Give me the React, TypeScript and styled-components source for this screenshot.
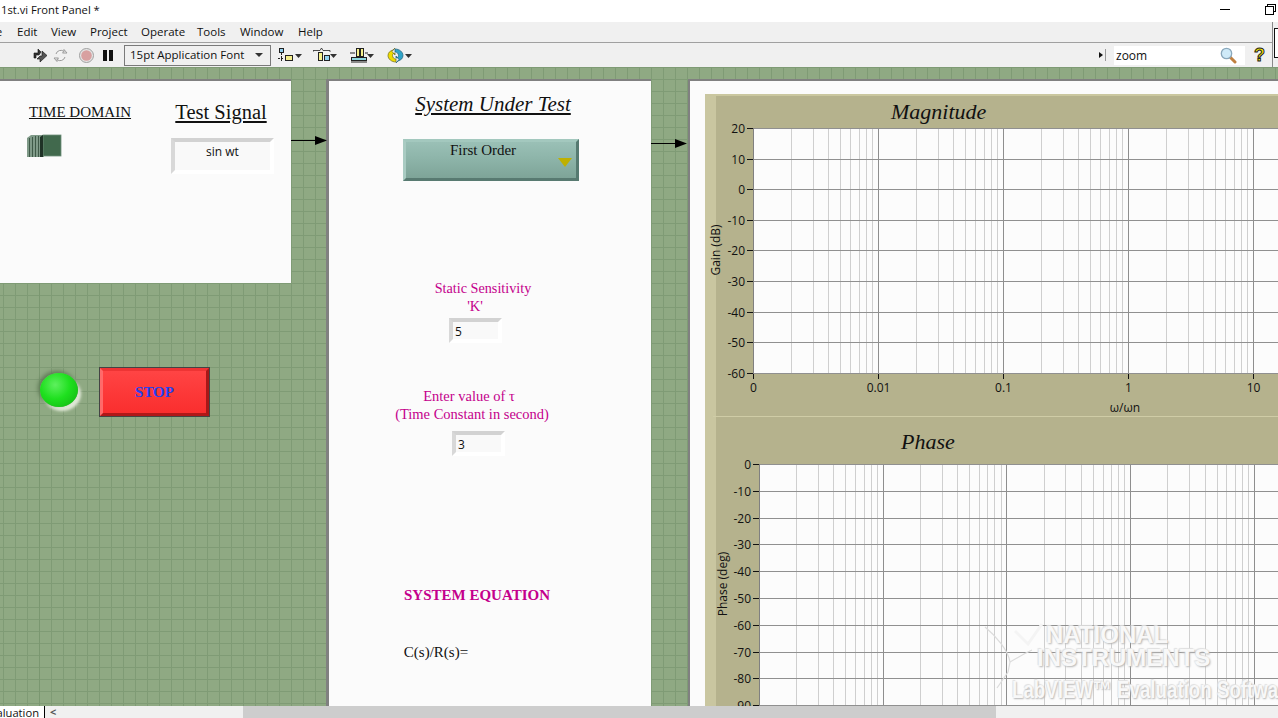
import styled, {createGlobalStyle} from 'styled-components';

const SANS = `"Open Sans", "Noto Sans", sans-serif`;
const SERIF = `"Liberation Serif", serif`;
const MAGENTA = '#c4008c';

const GlobalStyle = createGlobalStyle`
  html, body { margin: 0; padding: 0; background: #fff; overflow: hidden; }
  #root { width: 1278px; height: 718px; }
`;

const Window = styled.div`
  position: relative;
  width: 1278px;
  height: 718px;
  display: flex;
  flex-direction: column;
  overflow: hidden;
  font-family: ${SANS};
  color: #111;
`;

const TitleBar = styled.div`
  height: 22px;
  flex: none;
  display: flex;
  align-items: center;
  justify-content: space-between;
  padding: 0 2px 4px 1px;
  box-sizing: border-box;
  background: #fff;
  font-size: 11.2px;
`;

const WindowButtons = styled.div`
  display: flex;
  align-items: center;
  gap: 34px;
`;

const MenuBar = styled.div`
  height: 21px;
  flex: none;
  box-sizing: border-box;
  display: flex;
  align-items: center;
  background: #f0f0f0;
  border-bottom: 1px solid #a0a0a0;
  font-size: 11.5px;
  margin-left: -16px;
  padding-bottom: 2px;
`;

const MenuItem = styled.span<{ $w: number }>`
  width: ${({ $w }) => $w}px;
  flex: none;
`;

const ToolBar = styled.div`
  height: 24px;
  flex: none;
  display: flex;
  align-items: center;
  background: #f0f0f0;
  padding-left: 33px;
  box-sizing: border-box;
`;

const ToolIcon = styled.svg<{ $gap?: number }>`
  flex: none;
  display: block;
  margin-right: ${({ $gap }) => $gap ?? 0}px;
`;

const FontSelect = styled.div`
  width: 147px;
  height: 21px;
  flex: none;
  box-sizing: border-box;
  border: 1px solid #7a7a7a;
  margin-right: 7px;
  padding: 0 7px 1px 5px;
  display: flex;
  align-items: center;
  justify-content: space-between;
  font-size: 11.5px;
`;

const DownCaret = styled.span`
  width: 0;
  height: 0;
  border-left: 4px solid transparent;
  border-right: 4px solid transparent;
  border-top: 4px solid #333;
`;

const SearchGroup = styled.div`
  margin-left: auto;
  display: flex;
  align-items: center;
  height: 100%;
`;

const SearchBox = styled.div`
  width: 131px;
  height: 19px;
  margin: 0 9px 0 5px;
  padding: 0 8px 0 2px;
  box-sizing: border-box;
  background: #fff;
  display: flex;
  align-items: center;
  justify-content: space-between;
  font-size: 12px;
`;

const HelpMark = styled.span`
  width: 24px;
  text-align: left;
  font-family: "Liberation Sans", sans-serif;
  font-weight: 700;
  font-size: 18px;
  line-height: 1;
  color: #f6e800;
  -webkit-text-stroke: 1px #222;
`;

/* edge of the next pane peeking out past the toolbars */
const ToolEdge = styled.div`
  position: absolute;
  left: 1272px;
  top: 22px;
  width: 6px;
  height: 45px;
  box-sizing: border-box;
  border-left: 1px solid #8a8a8a;
  background: #f0f0f0;
  &::after {
    content: '';
    position: absolute;
    left: 1px;
    top: 6px;
    width: 6px;
    height: 30px;
    box-sizing: border-box;
    border: 1px solid #111;
    background: #fff;
  }
`;

const Canvas = styled.div`
  position: relative;
  flex: none;
  height: 639px;
  overflow: hidden;
  background-color: #8fa983;
  background-image:
    linear-gradient(#7a9770, #7a9770),
    linear-gradient(to right, #7f9b75 1px, transparent 1px),
    linear-gradient(to bottom, #7f9b75 1px, transparent 1px);
  background-size: 1px 100%, 12px 12px, 12px 12px;
  background-position: 39px 0, 3px 0, 0 0;
  background-repeat: no-repeat, repeat, repeat;
`;

/* free canvas: the front panel's decorations sit where the user dropped them */
const Decoration = styled.div<{ $x: number; $y: number; $w: number; $h: number; $edge?: number }>`
  position: absolute;
  left: ${({ $x }) => $x}px;
  top: ${({ $y }) => $y}px;
  width: ${({ $w }) => $w}px;
  height: ${({ $h }) => $h}px;
  box-sizing: border-box;
  background: #fbfbfb;
  border-top: 2px solid #808080;
  border-left: ${({ $edge }) => $edge ?? 0}px solid #808080;
`;

const Label = styled.div<{ $x: number; $y: number; $size?: number; $color?: string; $bold?: boolean; $italic?: boolean; $under?: boolean }>`
  position: absolute;
  left: ${({ $x }) => $x}px;
  top: ${({ $y }) => $y}px;
  font-family: ${SERIF};
  font-size: ${({ $size }) => $size ?? 15}px;
  line-height: 1.15;
  white-space: nowrap;
  transform: translateX(-50%);
  color: ${({ $color }) => $color ?? '#111'};
  font-weight: ${({ $bold }) => ($bold ? 700 : 400)};
  font-style: ${({ $italic }) => ($italic ? 'italic' : 'normal')};
  text-decoration: ${({ $under }) => ($under ? 'underline' : 'none')};
`;

const Control = styled.div<{ $x: number; $y: number; $w: number; $h: number; $center?: boolean }>`
  position: absolute;
  left: ${({ $x }) => $x}px;
  top: ${({ $y }) => $y}px;
  width: ${({ $w }) => $w}px;
  height: ${({ $h }) => $h}px;
  box-sizing: border-box;
  border-style: solid;
  border-width: 4px;
  border-color: #d2d2d2 #fff #fff #d8d8d8;
  background: #f9f9f9;
  font-size: 12px;
  padding: 1px 0 0 ${({ $center }) => ($center ? 0 : 2)}px;
  text-align: ${({ $center }) => ($center ? 'center' : 'left')};
`;

const RingButton = styled.div`
  position: absolute;
  left: 403px;
  top: 72px;
  width: 176px;
  height: 42px;
  box-sizing: border-box;
  border: 3px solid;
  border-color: #a3c8be #567a71 #587a71 #a9cbc2;
  background: linear-gradient(#9ac0b6 0%, #8fb6ab 40%, #7ea498 100%);
  font-family: ${SERIF};
  font-size: 15px;
  padding: 0 16px 0 0;
  text-align: center;
  line-height: 17px;
`;

const RingArrow = styled.span`
  position: absolute;
  right: 4px;
  top: 16px;
  width: 0;
  height: 0;
  border-left: 7px solid transparent;
  border-right: 7px solid transparent;
  border-top: 9px solid #bfb000;
`;

const Led = styled.div`
  position: absolute;
  left: 40px;
  top: 306px;
  width: 38px;
  height: 34px;
  border-radius: 50%;
  background: radial-gradient(ellipse at 40% 35%, #5ef05e 0%, #1fe01f 45%, #10b010 100%);
  box-shadow: -2px -2px 4px #5f7a56, 3px 4px 3px #e2ead9;
`;

const StopButton = styled.div`
  position: absolute;
  left: 99px;
  top: 300px;
  width: 111px;
  height: 50px;
  box-sizing: border-box;
  border: 4px solid;
  border-color: #ee3434 #a81818 #b01818 #ff6a6a;
  outline: 1px solid #444;
  outline-offset: -1px;
  background: linear-gradient(#ff4444, #fa2e2e);
  padding-top: 1px;
  display: flex;
  align-items: center;
  justify-content: center;
  font-family: ${SERIF};
  font-weight: 700;
  font-size: 15px;
  color: #2440f0;
`;

const WireSvg = styled.svg<{ $x: number; $y: number }>`
  position: absolute;
  left: ${({ $x }) => $x}px;
  top: ${({ $y }) => $y}px;
`;

const ToggleSvg = styled.svg`
  position: absolute;
  left: 26px;
  top: 53px;
`;

const GraphPanel = styled.div`
  position: absolute;
  left: 705px;
  top: 27px;
  width: 573px;
  height: 612px;
  box-sizing: border-box;
  background: #b5b28d;
  border-top: 2px solid #cac79f;
  border-left: 11px solid #c9c6a0;
  display: flex;
  flex-direction: column;
`;

const GraphTitle = styled.div<{ $pad: number; $h: number; $top: number }>`
  height: ${({ $h }) => $h}px;
  flex: none;
  box-sizing: border-box;
  padding: ${({ $top }) => $top}px 0 0 ${({ $pad }) => $pad}px;
  font-family: ${SERIF};
  font-style: italic;
  font-size: 22px;
  line-height: 24px;
  color: #111;
`;

const PlotSvg = styled.svg`
  display: block;
  flex: none;
  margin-left: -11px;
  font-family: ${SANS};
  font-size: 12px;
`;

const Watermark = styled.div`
  position: absolute;
  left: 984px;
  top: 555px;
  width: 294px;
  height: 84px;
  overflow: hidden;
  pointer-events: none;
`;

const WatermarkLogo = styled.svg`
  position: absolute;
  left: 0;
  top: 0;
`;

const WatermarkText = styled.div<{ $x: number; $y: number; $stretch?: number }>`
  position: absolute;
  left: ${({ $x }) => $x}px;
  top: ${({ $y }) => $y}px;
  font-family: "Liberation Sans", sans-serif;
  font-weight: 700;
  font-size: 24px;
  line-height: 22px;
  white-space: nowrap;
  color: #f8f8f8;
  transform-origin: left top;
  transform: scaleX(${({ $stretch }) => $stretch ?? 1});
  text-shadow: 1px 1px 2px #b4b4b4, -1px -1px 1px #e2e2e2;
`;

const BottomBar = styled.div`
  height: 12px;
  flex: none;
  display: flex;
  align-items: stretch;
  background: #f0f0f0;
  font-size: 11.2px;
`;

const Tab = styled.div`
  width: 45px;
  box-sizing: border-box;
  border: 1px solid #000;
  border-width: 1px 1px 0 0;
  background: #fff;
  margin-top: -1px;
  overflow: hidden;
  direction: rtl;
  line-height: 14px;
  padding-right: 5px;
  white-space: nowrap;
`;

const TabArrow = styled.span`
  width: 198px;
  flex: none;
  padding-left: 5px;
  box-sizing: border-box;
  font-size: 11px;
  line-height: 12px;
  font-weight: 700;
  color: #555;
`;

const Thumb = styled.div`
  width: 753px;
  background: #cdcdcd;
`;

const decadeLines = (start: number, decade: number, count: number) => {
  const lines: number[] = [];
  for (let d = 0; d < count; d++) {
    for (let m = 2; m < 10; m++) {
      const x = Math.round(start + decade * (d + Math.log10(m))) + 0.5;
      if (x < 1278) lines.push(x);
    }
  }
  return lines;
};

type PlotProps = {
  x0: number;
  top: number;
  bottom: number;
  decade: number;
  height: number;
  yTicks: { v: string; y: number }[];
  xLabels?: string[];
  yTitle: string;
  yTitleX: number;
  yTitleY: number;
};

// svg starts a little above the plot so the top tick label isn't clipped
const HEADROOM = 8;

const Plot = ({x0, top, bottom, decade, height, yTicks, xLabels, yTitle, yTitleX, yTitleY}: PlotProps) => {
  const majors = [1, 2, 3, 4].map((i) => Math.round(x0 + decade * i) + 0.5);
  return (
    <PlotSvg width={573} height={height + HEADROOM} viewBox={`705 ${top - HEADROOM} 573 ${height + HEADROOM}`}>
      <rect x={x0} y={top} width={1278 - x0} height={bottom - top} fill="#fcfcfc" />
      {decadeLines(x0, decade, 5).map((x) => (
        <line key={x} x1={x} x2={x} y1={top} y2={bottom} stroke="#cfcfcf" />
      ))}
      {majors.map((x) => (
        <line key={x} x1={x} x2={x} y1={top} y2={bottom} stroke="#8e8e8e" />
      ))}
      {yTicks.map((t) => (
        <g key={t.v}>
          <line x1={x0} x2={1278} y1={t.y + 0.5} y2={t.y + 0.5} stroke="#909090" />
          <line x1={x0 - 6} x2={x0} y1={t.y + 0.5} y2={t.y + 0.5} stroke="#111" />
          <text x={x0 - 8} y={t.y + 4.5} textAnchor="end" fill="#111">{t.v}</text>
        </g>
      ))}
      <line x1={x0 + 0.5} x2={x0 + 0.5} y1={top} y2={bottom} stroke="#808080" />
      {xLabels && xLabels.map((l, i) => {
        const x = Math.round(x0 + decade * i) + 0.5;
        return (
          <g key={l}>
            <line x1={x} x2={x} y1={bottom} y2={bottom + 5} stroke="#111" />
            <text x={x} y={bottom + 18} textAnchor="middle" fill="#111">{l}</text>
          </g>
        );
      })}
      {xLabels && <text x={1125} y={412} textAnchor="middle" fill="#111">ω/ωn</text>}
      {xLabels && <line x1={713} x2={1278} y1={416.5} y2={416.5} stroke="#cfcca6" />}
      <text transform={`translate(${yTitleX} ${yTitleY}) rotate(-90)`} textAnchor="middle" fill="#111">
        {yTitle}
      </text>
    </PlotSvg>
  );
};

const gainTicks = [20, 10, 0, -10, -20, -30, -40, -50, -60].map((v, i) => ({v: String(v), y: Math.round(128 + i * 30.6)}));
const phaseTicks = [0, -10, -20, -30, -40, -50, -60, -70, -80, -90].map((v, i) => ({v: String(v), y: Math.round(464 + i * 26.8)}));

const menus: [string, number][] = [['File', 33], ['Edit', 34], ['View', 39], ['Project', 51], ['Operate', 56], ['Tools', 43], ['Window', 58], ['Help', 40]];

const App = () => (
  <Window>
    <GlobalStyle />
    <TitleBar>
      <span>1st.vi Front Panel *</span>
      <WindowButtons>
        <svg width="11" height="10" viewBox="0 0 11 10"><path d="M0 5.5H10" stroke="#000" /></svg>
        <svg width="11" height="11" viewBox="0 0 11 11" fill="#fff" stroke="#000"><rect x="2.5" y="0.5" width="8" height="7" /><rect x="0.5" y="2.5" width="8" height="8" /></svg>
      </WindowButtons>
    </TitleBar>
    <MenuBar>
      {menus.map(([m, w]) => <MenuItem key={m} $w={w}>{m}</MenuItem>)}
    </MenuBar>
    <ToolBar>
      <ToolIcon width="15" height="15" viewBox="0 0 15 15" $gap={5}>
        <path d="M1 5H5V1L8 4L6 7H3V10H1Z" fill="#333" stroke="#111" strokeWidth=".6" />
        <path d="M9 3L14 7.5L7 14V11H4L7 8H9Z" fill="#555" stroke="#111" strokeWidth=".6" />
      </ToolIcon>
      <ToolIcon width="15" height="15" viewBox="0 0 15 15" $gap={11}>
        <path d="M3 6A5 5 0 0 1 11 3.5V1.5L14 5H9.5L11 3.5M12 9A5 5 0 0 1 4 11.5V13.5L1 10H5.5L4 11.5" fill="#f4f4f4" stroke="#9a9a9a" />
      </ToolIcon>
      <ToolIcon width="15" height="15" viewBox="0 0 15 15" $gap={9}>
        <circle cx="7.5" cy="7.5" r="7" fill="#e4e4e4" stroke="#a0a0a0" />
        <circle cx="7.5" cy="7.5" r="5.3" fill="#d8a0a0" />
      </ToolIcon>
      <ToolIcon width="10" height="11" viewBox="0 0 10 11" $gap={11}>
        <path d="M0 0H4V11H0ZM6 0H10V11H6Z" fill="#111" />
      </ToolIcon>
      <FontSelect>15pt Application Font<DownCaret /></FontSelect>
      <ToolIcon width="24" height="16" viewBox="0 0 24 16" $gap={11}>
        <rect x="1.5" y="1.5" width="4" height="4" fill="#8fd0f0" stroke="#222" />
        <rect x="7.5" y="8.5" width="7" height="5" fill="#f5f08c" stroke="#222" />
        <path d="M3.5 6V14M0 11.5H6" stroke="#222" strokeDasharray="2 1" />
        <path d="M17 7H24L20.5 11Z" fill="#333" />
      </ToolIcon>
      <ToolIcon width="24" height="16" viewBox="0 0 24 16" $gap={13}>
        <path d="M0 5V3.5H7L8.5 1L10 3.5H17V5" fill="none" stroke="#222" strokeWidth=".8" />
        <rect x="5.5" y="5.5" width="4" height="8" fill="#f5f08c" stroke="#222" />
        <rect x="11.5" y="8.5" width="5" height="5" fill="#8fd0f0" stroke="#222" />
        <path d="M17 7H24L20.5 11Z" fill="#333" />
      </ToolIcon>
      <ToolIcon width="24" height="16" viewBox="0 0 24 16" $gap={13}>
        <rect x="6.5" y="1.5" width="3" height="8" fill="#f5f08c" stroke="#222" />
        <rect x="10.5" y="1.5" width="3" height="8" fill="#f5f08c" stroke="#222" />
        <rect x="1.5" y="10.5" width="15" height="3" fill="#8fd8e0" stroke="#222" />
        <path d="M0 6H5M15 6H18M1 15H17" stroke="#222" />
        <path d="M17 7H24L20.5 11Z" fill="#333" />
      </ToolIcon>
      <ToolIcon width="25" height="17" viewBox="0 0 25 17">
        <path d="M8 1L5 4.5L8 8V6C6 6 5.5 7.5 5.5 8.5C5.5 10.5 7 12 9 12V15C4.5 15 1 12 1 8.5C1 5.5 3.5 3.5 6 3Z" fill="#f0dc00" stroke="#6a6a20" strokeWidth=".7" />
        <path d="M9 16L12 12.5L9 9V11C11 11 11.5 9.5 11.5 8.5C11.5 6.5 10 5 8 5V2C12.5 2 16 5 16 8.5C16 11.5 13.5 13.5 11 14Z" fill="#2fa4c8" stroke="#1f5f78" strokeWidth=".7" />
        <path d="M18 7H25L21.5 11Z" fill="#333" />
      </ToolIcon>
      <SearchGroup>
        <svg width="10" height="16" viewBox="0 0 10 16"><path d="M0 5L4 8L0 11Z" fill="#111" /><path d="M6.5 2V14" stroke="#999" /></svg>
        <SearchBox>
          zoom
          <svg width="17" height="17" viewBox="0 0 17 17">
            <path d="M9.5 9.5L15 15" stroke="#c08040" strokeWidth="3" strokeLinecap="round" />
            <circle cx="6.5" cy="6.5" r="5.2" fill="#cfeaf8" stroke="#8aa8bc" strokeWidth="1.3" />
          </svg>
        </SearchBox>
        <HelpMark>?</HelpMark>
      </SearchGroup>
    </ToolBar>
    <ToolEdge />
    <Canvas>
      <Decoration $x={0} $y={12} $w={291} $h={204}>
        <Label $x={80} $y={23} $under>TIME DOMAIN</Label>
        <Label $x={221} $y={20} $size={20.5} $under>Test Signal</Label>
        <ToggleSvg width="36" height="24" viewBox="0 0 36 24">
          <path d="M1 4L5 1H18V23H1Z" fill="#7f9a88" />
          <path d="M3.5 4V23M6.5 3V23M9.5 2V23M12.5 2V23" stroke="#3f5a48" />
          <rect x="17" y="1" width="18" height="21" fill="#41694d" stroke="#6f8f7a" strokeWidth=".8" />
          <path d="M14 3L17 1V23L14 23Z" fill="#1f3226" />
        </ToggleSvg>
        <Control $x={171} $y={57} $w={103} $h={36} $center>sin wt</Control>
      </Decoration>
      <Decoration $x={326} $y={12} $w={325} $h={640} $edge={3} />
      <Decoration $x={688} $y={12} $w={590} $h={640} $edge={2} />
      <WireSvg $x={291} $y={66} width="37" height="14" viewBox="0 0 37 14">
        <path d="M0 7.5H30" stroke="#000" /><path d="M24 3L36 7.5L24 12Z" fill="#000" />
      </WireSvg>
      <WireSvg $x={651} $y={69} width="37" height="14" viewBox="0 0 37 14">
        <path d="M0 7.5H30" stroke="#000" /><path d="M24 3L36 7.5L24 12Z" fill="#000" />
      </WireSvg>
      <Label $x={493} $y={25} $size={21} $italic $under>System Under Test</Label>
      <RingButton>
        First Order
        <RingArrow />
      </RingButton>
      <Label $x={483} $y={213} $size={14.2} $color={MAGENTA}>Static Sensitivity</Label>
      <Label $x={475} $y={231} $size={14.5} $color={MAGENTA}>'K'</Label>
      <Control $x={449} $y={251} $w={53} $h={25}>5</Control>
      <Label $x={469} $y={321} $size={14.5} $color={MAGENTA}>Enter value of τ</Label>
      <Label $x={472} $y={339} $size={14.5} $color={MAGENTA}>(Time Constant in second)</Label>
      <Control $x={452} $y={364} $w={53} $h={25}>3</Control>
      <Label $x={477} $y={520} $color={MAGENTA} $bold>SYSTEM EQUATION</Label>
      <Label $x={436} $y={577}>C(s)/R(s)=</Label>
      <Led />
      <StopButton>STOP</StopButton>
      <GraphPanel>
        <GraphTitle $pad={175} $h={24} $top={4}>Magnitude</GraphTitle>
        <Plot
          x0={753}
          top={128}
          bottom={374}
          decade={125}
          height={290}
          yTicks={gainTicks}
          xLabels={['0', '0.01', '0.1', '1', '10']}
          yTitle="Gain (dB)"
          yTitleX={720}
          yTitleY={250}
        />
        <GraphTitle $pad={185} $h={38} $top={12}>Phase</GraphTitle>
        <Plot
          x0={759}
          top={464}
          bottom={706}
          decade={123.7}
          height={242}
          yTicks={phaseTicks}
          yTitle="Phase (deg)"
          yTitleX={727}
          yTitleY={584}
        />
      </GraphPanel>
      <Watermark>
        <WatermarkLogo width="64" height="70" viewBox="0 0 64 70" fill="none" stroke="#dcdcdc">
          <path d="M1 5C12 14 24 28 26 40L24 50L13 66" strokeWidth="1.2" />
          <path d="M26 40L40 32L48 28" strokeWidth="1.2" />
          <path d="M31 9L44 22L58 2" stroke="#f4f4f4" strokeWidth="3" />
        </WatermarkLogo>
        <WatermarkText $x={62} $y={2}>NATIONAL</WatermarkText>
        <WatermarkText $x={53} $y={25}>INSTRUMENTS</WatermarkText>
        <WatermarkText $x={28} $y={57} $stretch={0.78}>LabVIEW™ Evaluation Software</WatermarkText>
      </Watermark>
    </Canvas>
    <BottomBar>
      <Tab>Evaluation</Tab>
      <TabArrow>&lt;</TabArrow>
      <Thumb />
    </BottomBar>
  </Window>
);

export default App;
